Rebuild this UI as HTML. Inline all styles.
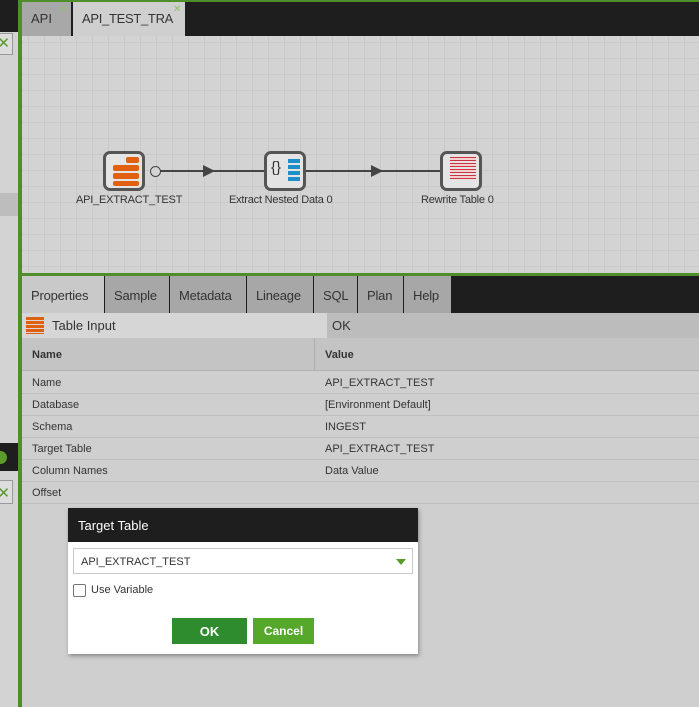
<!DOCTYPE html>
<html><head><style>
*{margin:0;padding:0;box-sizing:border-box}
body{width:699px;height:707px;overflow:hidden;background:#cfcfcf;font-family:"Liberation Sans",sans-serif;position:relative;font-size:12px;color:#333}
.a{position:absolute}
.grid{background-color:#d3d3d3;background-image:linear-gradient(#c9c9c9 1px,transparent 1px),linear-gradient(90deg,#c9c9c9 1px,transparent 1px);background-size:16px 16px;background-position:6px 6px}
.tab{position:absolute;top:276px;height:37px;background:#a7a7a7;font-size:13px;color:#333;padding:12px 0 0 9px;letter-spacing:-0.2px}
.row{position:absolute;left:22px;right:0;height:22px;border-bottom:1px solid #c0c0c0;font-size:11px;color:#333}
.row span{position:absolute;top:5px}
</style></head><body>
<div class="a" style="left:0;top:0;width:18px;height:707px;background:#d3d3d3"></div>
<div class="a" style="left:0;top:0;width:18px;height:32px;background:#1e1e1e"></div>
<div class="a" style="left:-4px;top:33px;width:17px;height:22px;border:1px solid #999;background:#ddd;color:#5a9b2c;font-size:15px;text-align:right;padding-right:2px">✕</div>
<div class="a" style="left:0;top:193px;width:18px;height:23px;background:#bdbdbd"></div>
<div class="a" style="left:0;top:443px;width:18px;height:28px;background:#1e1e1e"></div>
<div class="a" style="left:-6px;top:451px;width:13px;height:13px;border-radius:50%;background:#5a9b2c"></div>
<div class="a" style="left:-4px;top:480px;width:17px;height:24px;border:1px solid #999;background:#ddd;color:#5a9b2c;font-size:15px;text-align:right;padding:3px 2px 0 0">✕</div>
<div class="a" style="left:18px;top:0;width:4px;height:707px;background:#4f8f2a"></div>
<div class="a" style="left:22px;top:0;width:677px;height:36px;background:#1e1e1e;border-top:2px solid #4f8f2a"></div>
<div class="a" style="left:22px;top:2px;width:49px;height:34px;background:#a8a8a8;font-size:13px;padding:9px 0 0 9px">API<span style="position:absolute;left:37px;top:2px;color:#8fbf6a;font-size:10px">✕</span></div>
<div class="a" style="left:73px;top:2px;width:112px;height:34px;background:#cfcfcf;font-size:13px;padding:9px 0 0 9px;letter-spacing:-0.3px">API_TEST_TRA<span style="position:absolute;left:100px;top:2px;color:#8fbf6a;font-size:10px">✕</span></div>
<div class="a grid" style="left:22px;top:36px;width:677px;height:237px"></div>
<div class="a" style="left:154px;top:170px;width:290px;height:2px;background:#444"></div>
<div class="a" style="left:150px;top:166px;width:11px;height:11px;border:1.5px solid #444;border-radius:50%;background:#d4d4d4"></div>
<div class="a" style="left:203px;top:165px;border-left:12px solid #444;border-top:6px solid transparent;border-bottom:6px solid transparent"></div>
<div class="a" style="left:371px;top:165px;border-left:12px solid #444;border-top:6px solid transparent;border-bottom:6px solid transparent"></div>
<div class="a" style="left:103px;top:151px;width:42px;height:40px;border:3px solid #555;border-radius:7px;background:#e4e4e4"></div>
<div class="a" style="left:126px;top:157px;width:13px;height:6px;background:#e06010;border-radius:2px"></div>
<div class="a" style="left:113px;top:165px;width:26px;height:6px;background:#e06010;border-radius:2px"></div>
<div class="a" style="left:113px;top:173px;width:26px;height:6px;background:#e06010;border-radius:2px"></div>
<div class="a" style="left:113px;top:181px;width:26px;height:5px;background:#e06010;border-radius:2px"></div>
<div class="a" style="left:264px;top:151px;width:42px;height:40px;border:3px solid #555;border-radius:7px;background:#e4e4e4;font-size:15px;padding:5px 0 0 4px;color:#333">{}</div>
<div class="a" style="left:288px;top:159px;width:12px;height:24px;background:repeating-linear-gradient(#1d8fc9 0 4px,transparent 4px 6px)"></div>
<div class="a" style="left:440px;top:151px;width:42px;height:40px;border:3px solid #555;border-radius:7px;background:#e4e4e4"></div>
<div class="a" style="left:450px;top:157px;width:26px;height:24px;background:repeating-linear-gradient(#d03040 0 1px,#f3d0d0 1px 3px,#d03040 3px 4px,transparent 4px 6px)"></div>
<div class="a" style="left:76px;top:194px;font-size:11px;letter-spacing:-0.2px">API_EXTRACT_TEST</div>
<div class="a" style="left:229px;top:194px;font-size:11px;letter-spacing:-0.2px">Extract Nested Data 0</div>
<div class="a" style="left:421px;top:194px;font-size:11px;letter-spacing:-0.2px">Rewrite Table 0</div>
<div class="a" style="left:22px;top:273px;width:677px;height:3px;background:#4f8f2a"></div>
<div class="a" style="left:22px;top:276px;width:677px;height:37px;background:#1e1e1e"></div>
<div class="tab" style="left:22px;width:82px;background:#c9c9c9">Properties</div>
<div class="tab" style="left:105px;width:64px">Sample</div>
<div class="tab" style="left:170px;width:76px">Metadata</div>
<div class="tab" style="left:247px;width:66px">Lineage</div>
<div class="tab" style="left:314px;width:43px">SQL</div>
<div class="tab" style="left:358px;width:45px">Plan</div>
<div class="tab" style="left:404px;width:47px">Help</div>
<div class="a" style="left:22px;top:313px;width:305px;height:25px;background:#d6d6d6;font-size:13px;padding:5px 0 0 30px">Table Input</div>
<div class="a" style="left:26px;top:317px;width:18px;height:17px;background:repeating-linear-gradient(#e06010 0 3px,transparent 3px 4px)"></div>
<div class="a" style="left:327px;top:313px;width:372px;height:25px;background:#bcbcbc;font-size:13px;padding:5px 0 0 5px">OK</div>
<div class="a" style="left:22px;top:338px;width:677px;height:33px;background:#c4c4c4;font-size:11px;font-weight:bold;border-bottom:1px solid #b0b0b0"><span class="a" style="left:10px;top:11px">Name</span><span class="a" style="left:303px;top:11px">Value</span></div>
<div class="a" style="left:314px;top:338px;width:1px;height:33px;background:#b0b0b0"></div>
<div class="row" style="top:372px"><span style="left:10px">Name</span><span style="left:303px">API_EXTRACT_TEST</span></div>
<div class="row" style="top:394px"><span style="left:10px">Database</span><span style="left:303px">[Environment Default]</span></div>
<div class="row" style="top:416px"><span style="left:10px">Schema</span><span style="left:303px">INGEST</span></div>
<div class="row" style="top:438px"><span style="left:10px">Target Table</span><span style="left:303px">API_EXTRACT_TEST</span></div>
<div class="row" style="top:460px"><span style="left:10px">Column Names</span><span style="left:303px">Data Value</span></div>
<div class="row" style="top:482px"><span style="left:10px">Offset</span></div>
<div class="a" style="left:68px;top:508px;width:350px;height:146px;background:#fff;box-shadow:1px 2px 4px rgba(0,0,0,.35)">
<div style="height:34px;background:#1e1e1e;color:#fff;font-size:13px;padding:10px 0 0 10px">Target Table</div>
<div class="a" style="left:5px;top:40px;width:340px;height:26px;border:1px solid #c8c8c8;font-size:11px;padding:7px 0 0 7px">API_EXTRACT_TEST
<div class="a" style="right:6px;top:10px;border-top:6px solid #5a9b2c;border-left:5px solid transparent;border-right:5px solid transparent"></div></div>
<div class="a" style="left:5px;top:76px;width:13px;height:13px;border:1px solid #777;border-radius:2px"></div>
<div class="a" style="left:23px;top:76px;font-size:11px">Use Variable</div>
<div class="a" style="left:104px;top:110px;width:75px;height:26px;background:#2e8b2e;color:#fff;font-weight:bold;font-size:13px;text-align:center;padding-top:6px">OK</div>
<div class="a" style="left:185px;top:110px;width:61px;height:26px;background:#55a82a;color:#fff;font-weight:bold;font-size:12px;text-align:center;padding-top:6px">Cancel</div>
</div>
</body></html>
